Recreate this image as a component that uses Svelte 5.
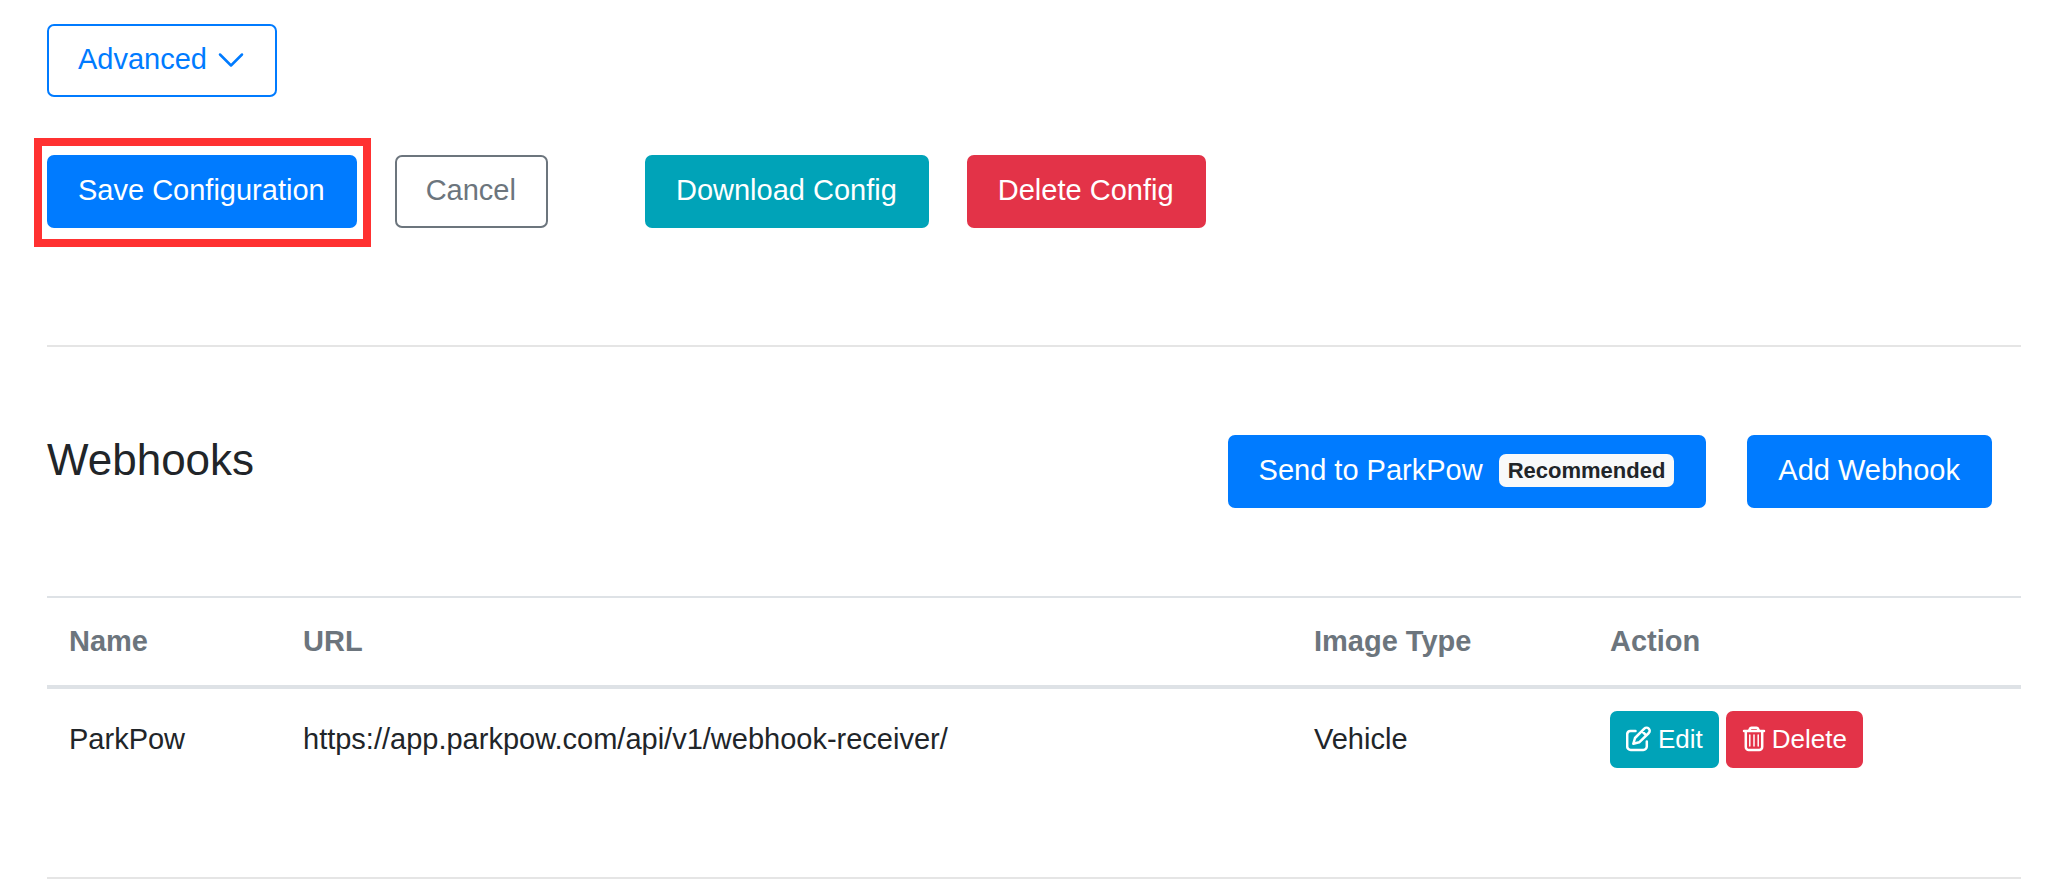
<script>
  const webhooks = [
    { name: 'ParkPow', url: 'https://app.parkpow.com/api/v1/webhook-receiver/', imageType: 'Vehicle' }
  ];
</script>

<main>
  <div class="row">
    <button class="btn outline-primary" type="button">
      Advanced
      <svg class="chevron" viewBox="0 0 28 28" aria-hidden="true">
        <path d="M3 8.500l11 11L25 8.500" />
      </svg>
    </button>
  </div>

  <div class="row actions">
    <span class="highlight">
      <button class="btn primary" type="button">Save Configuration</button>
    </span>
    <button class="btn outline-secondary" type="button">Cancel</button>
    <button class="btn info spaced" type="button">Download Config</button>
    <button class="btn danger" type="button">Delete Config</button>
  </div>

  <hr />

  <section>
    <header>
      <h2>Webhooks</h2>
      <div class="tools">
        <button class="btn primary" type="button">
          Send to ParkPow <span class="badge">Recommended</span>
        </button>
        <button class="btn primary" type="button">Add Webhook</button>
      </div>
    </header>

    <table>
      <colgroup>
        <col class="c-name" />
        <col />
        <col class="c-type" />
        <col class="c-action" />
      </colgroup>
      <thead>
        <tr>
          <th scope="col">Name</th>
          <th scope="col">URL</th>
          <th scope="col">Image Type</th>
          <th scope="col">Action</th>
        </tr>
      </thead>
      <tbody>
        {#each webhooks as hook}
          <tr>
            <td>{hook.name}</td>
            <td>{hook.url}</td>
            <td>{hook.imageType}</td>
            <td>
              <div class="row-actions">
                <button class="btn small info" type="button">
                  <svg class="icon" viewBox="0 0 26 26" aria-hidden="true">
                    <path d="M9.500 5H4.500A3.500 3.500 0 0 0 1.200 8.500V20.500A3.500 3.500 0 0 0 4.700 24H17.300A3.500 3.500 0 0 0 20.800 20.500V15.500" />
                    <path d="M7.300 17.800L9 12L18.300 2.600A3.100 3.100 0 0 1 22.800 7L13.200 16.300Z M15.800 5L20.200 9.400" />
                  </svg>
                  Edit
                </button>
                <button class="btn small danger" type="button">
                  <svg class="icon trash" viewBox="0 0 24 26" aria-hidden="true">
                    <path d="M2 5H22M3.800 5V21A3 3 0 0 0 6.800 24H17.200A3 3 0 0 0 20.200 21V5M7 5L7.800 3A2 2 0 0 1 9.600 1.700H14.400A2 2 0 0 1 16.200 3L17 5" />
                    <path class="thin" d="M7.800 9V20M12 9V20M16.200 9V20" />
                  </svg>
                  Delete
                </button>
              </div>
            </td>
          </tr>
        {/each}
      </tbody>
    </table>
  </section>

  <hr class="end" />
</main>

<style>
  :global(body) {
    margin: 0;
    background: #fff;
  }

  main {
    padding: 24px 27px 12px 47px;
    color: #212529;
    font: 29px/43px "Liberation Sans", Arial, sans-serif;
  }

  .row {
    display: flex;
  }

  .actions {
    margin-top: 58px;
    gap: 38px;
  }

  .btn {
    display: inline-flex;
    align-items: center;
    padding: 12px 30px 14px 29px;
    border: 2px solid transparent;
    border-radius: 7px;
    color: #fff;
    font: inherit;
    white-space: nowrap;
    cursor: pointer;
  }

  .primary {
    background: #007bff;
    border-color: #007bff;
  }

  .info {
    background: #00a3b8;
    border-color: #00a3b8;
  }

  .danger {
    background: #e33348;
    border-color: #e33348;
  }

  .outline-primary {
    background: #fff;
    border-color: #007bff;
    color: #007bff;
  }

  .outline-secondary {
    background: #fff;
    border-color: #6c757d;
    color: #6c757d;
  }

  .spaced {
    margin-left: 59px;
  }

  .highlight {
    position: relative;
    display: flex;
  }

  .highlight::after {
    content: "";
    position: absolute;
    inset: -17px -14px -19px -13px;
    border: 8px solid #ff3131;
    pointer-events: none;
  }

  svg {
    flex: none;
    fill: none;
    stroke: currentColor;
    stroke-width: 2.5;
    stroke-linecap: round;
    stroke-linejoin: round;
  }

  .chevron {
    width: 28px;
    height: 28px;
    margin-left: 10px;
  }

  hr {
    margin: 117px 0 0;
    border: 0;
    border-top: 2px solid #e5e5e5;
  }

  header {
    display: flex;
    justify-content: space-between;
    align-items: flex-start;
    margin-top: 88px;
  }

  h2 {
    margin: 0;
    font-size: 44px;
    font-weight: 400;
    line-height: 50px;
  }

  .tools {
    display: flex;
    gap: 41px;
    margin-right: 29px;
  }

  .badge {
    margin-left: 16px;
    padding: 0 9px;
    border-radius: 7px;
    background: #f8f9fa;
    color: #212529;
    font-size: 22px;
    font-weight: 700;
    line-height: 33px;
  }

  table {
    width: 100%;
    margin-top: 88px;
    border-collapse: separate;
    border-spacing: 0;
    table-layout: fixed;
  }

  .c-name {
    width: 234px;
  }

  .c-type {
    width: 296px;
  }

  .c-action {
    width: 433px;
  }

  th,
  td {
    padding: 22px;
    text-align: left;
    vertical-align: middle;
  }

  th {
    border-top: 2px solid #dee2e6;
    border-bottom: 4px solid #dee2e6;
    color: #6c757d;
    font-weight: 700;
  }

  .row-actions {
    display: flex;
    gap: 7px;
  }

  .small {
    gap: 6px;
    padding: 7px 14px;
    font-size: 26px;
    line-height: 39px;
  }

  .icon {
    width: 26px;
    height: 26px;
    margin-bottom: 2px;
  }

  .trash {
    width: 24px;
  }

  .thin {
    stroke-width: 1.5;
  }

  .end {
    margin-top: 87px;
  }
</style>
